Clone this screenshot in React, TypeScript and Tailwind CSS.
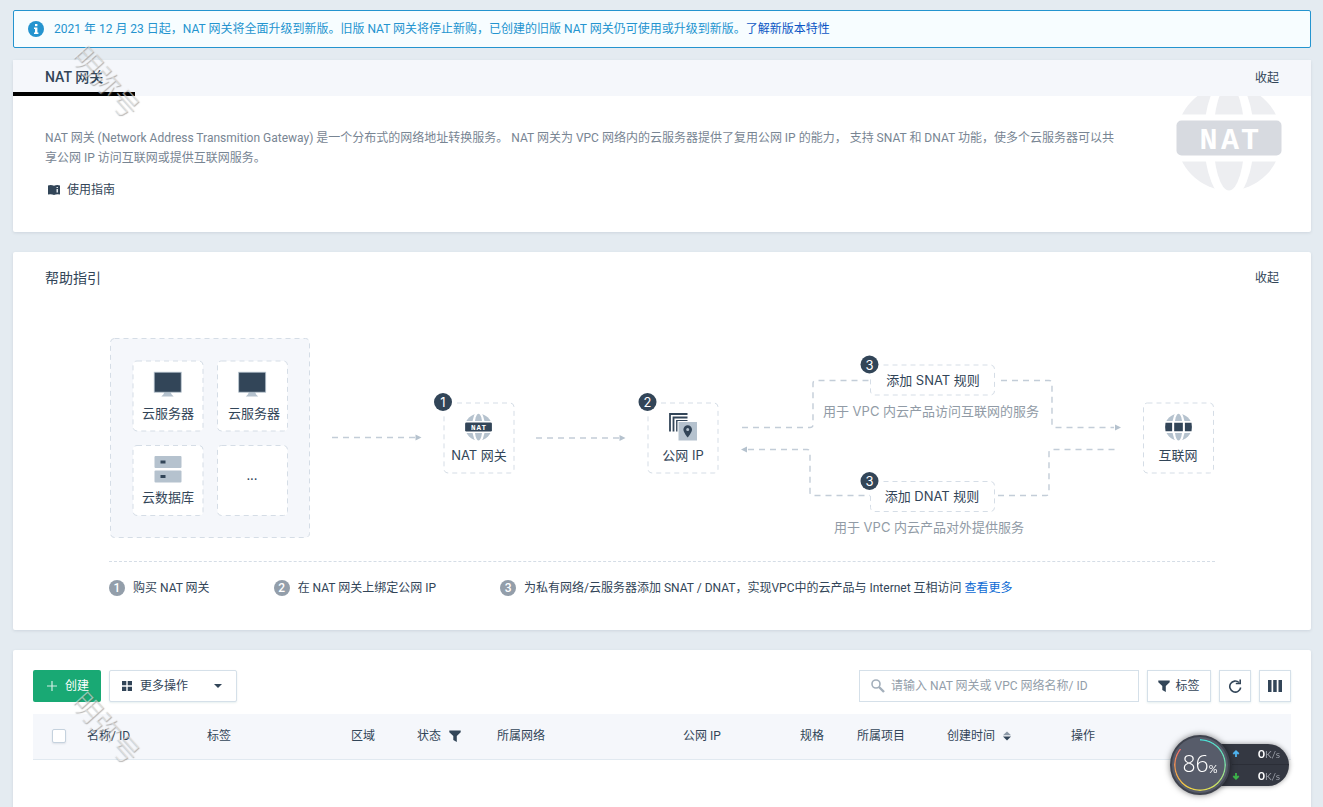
import React, { useState } from 'react'

interface Column {
  key: string
  label: string
  width: string
  filter?: boolean
  sort?: boolean
}

const columns: Column[] = [
  { key: 'name', label: '名称/ ID', width: 'w-[120px]' },
  { key: 'tag', label: '标签', width: 'w-[144px]' },
  { key: 'zone', label: '区域', width: 'w-[66px]' },
  { key: 'status', label: '状态', width: 'w-[80px]', filter: true },
  { key: 'network', label: '所属网络', width: 'w-[186px]' },
  { key: 'ip', label: '公网 IP', width: 'w-[117px]' },
  { key: 'spec', label: '规格', width: 'w-[57px]' },
  { key: 'project', label: '所属项目', width: 'w-[90px]' },
  { key: 'created', label: '创建时间', width: 'w-[124px]', sort: true },
  { key: 'action', label: '操作', width: '' },
]

function InfoIcon() {
  return (
    <svg viewBox="0 0 16 16" className="h-4 w-4 shrink-0">
      <circle cx="8" cy="8" r="8" fill="#2494cf" />
      <rect x="7" y="3" width="2.4" height="2.2" fill="#fff" />
      <path d="M6 6.6h3.4v5H10.4V13H6v-1.4h1V8H6z" fill="#fff" />
    </svg>
  )
}

function BookIcon() {
  return (
    <svg viewBox="0 0 12 10" className="h-[10px] w-3 shrink-0" fill="#324558">
      <path d="M0 .4Q3.400-.4 6 .8V10Q3.400 8.800 0 9.500z" />
      <path d="M6 .8Q8.600-.4 12 .4V9.500Q8.600 8.800 6 10z" />
      <path d="M8.500 2h1.500v1H8.500zM8.500 4h1.500v3.500H8.500z" fill="#dfe5eb" />
    </svg>
  )
}

function FilterIcon() {
  return (
    <svg viewBox="0 0 12 12" className="h-3 w-3 shrink-0" fill="#324558">
      <path d="M.3.500h11.400v1.800L7.800 6v6L4.300 10V6L.3 2.300z" />
    </svg>
  )
}

function SortIcon() {
  return (
    <svg viewBox="0 0 8 10" className="h-[10px] w-2 shrink-0">
      <path d="M4 .5L8 4.200H0z" fill="#8b98a6" />
      <path d="M0 5.500H8L4 9.500z" fill="#324558" />
    </svg>
  )
}

function GlobeShape({ color }: { color: string }) {
  return (
    <>
      <circle cx="53" cy="53" r="52.500" fill={color} />
      <ellipse cx="53" cy="53" rx="25" ry="62" fill="#fff" />
      <ellipse cx="53" cy="53" rx="15.700" ry="52.500" fill={color} />
      <rect x="0" y="29.500" width="106" height="47" fill="#fff" />
    </>
  )
}

function NatGlobe({ color, barColor }: { color: string; barColor: string }) {
  return (
    <>
      <GlobeShape color={color} />
      <rect x=".5" y="35.500" width="105" height="35" rx="5" fill={barColor} />
      <text
        x="32.500 54 74"
        y="63.500"
        textAnchor="middle"
        fill="#fff"
        fontSize="30"
        fontWeight="700"
        fontFamily='"Liberation Mono", monospace'
      >
        NAT
      </text>
    </>
  )
}

function StepBadge({ x, y, n }: { x: number; y: number; n: number }) {
  return (
    <g>
      <circle cx={x} cy={y} r="11" fill="#fff" />
      <circle cx={x} cy={y} r="9" fill="#324558" />
      <text x={x} y={y + 5} textAnchor="middle" fontSize="13" fill="#fff">
        {n}
      </text>
    </g>
  )
}

function Monitor({ x, y }: { x: number; y: number }) {
  return (
    <g transform={`translate(${x} ${y})`}>
      <path d="M10.500 20h6l1.200 2.500 2 2H7.300l2-2z" fill="#b5c2ce" />
      <rect x=".2" y=".2" width="27" height="20" fill="#324558" stroke="#b5c2ce" strokeWidth=".8" />
    </g>
  )
}

function GuideDiagram() {
  const box = { fill: '#fff', stroke: '#d5dde6', strokeDasharray: '5 4', rx: 4 }
  const line = { fill: 'none', stroke: '#c3cdd8', strokeWidth: 1.4, strokeDasharray: '6 5' }
  return (
    <svg
      viewBox="0 0 1106 204"
      role="img"
      aria-label="NAT 网关使用流程"
      className="block w-full"
      fontFamily='Inter, "Noto Sans CJK SC", sans-serif'
      fontSize="13"
      fill="#324558"
    >
      <rect {...box} x="1.500" y="1.500" width="199" height="199" fill="#f5f7fb" />
      <rect {...box} x="24" y="24" width="70" height="70" />
      <rect {...box} x="108.500" y="24" width="70" height="70" />
      <rect {...box} x="24" y="108.500" width="70" height="70" />
      <rect {...box} x="108.500" y="108.500" width="70" height="70" />
      <Monitor x={45} y={35} />
      <Monitor x={129.5} y={35} />
      <text x="33" y="81">云服务器</text>
      <text x="119" y="81">云服务器</text>
      <rect x="45.500" y="119" width="27" height="12" rx="1" fill="#b5c2ce" />
      <rect x="45.500" y="133.500" width="27" height="12" rx="1" fill="#b5c2ce" />
      <path d="M51.500 123.500h5v3h-5zM51.500 138h5v3h-5z" />
      <text x="33" y="165">云数据库</text>
      <text x="143" y="143" textAnchor="middle">...</text>

      <path {...line} d="M223 100.500H306" />
      <path d="M306.500 97.500l6 3-6 3z" fill="#b5c2ce" />

      <rect {...box} x="335" y="66" width="70" height="70" />
      <StepBadge x={334} y={65} n={1} />
      <g transform="translate(356 76.500) scale(.255)">
        <NatGlobe color="#b5c2ce" barColor="#324558" />
      </g>
      <text x="370" y="123" textAnchor="middle">NAT 网关</text>

      <path {...line} d="M427 101H510" />
      <path d="M510.500 98l6 3-6 3z" fill="#b5c2ce" />

      <rect {...box} x="539" y="66" width="70" height="70" />
      <StepBadge x={538.5} y={65} n={2} />
      <path
        d="M561 94.500V77H578.500M564.500 94.500V80.500H578.500M568 94.500V84H578.500"
        fill="none"
        stroke="#324558"
        strokeWidth="1.800"
      />
      <rect x="569" y="84.500" width="19.500" height="19.500" fill="#b5c2ce" stroke="#fff" />
      <path
        fillRule="evenodd"
        d="M578.700 88.200a4.300 4.300 0 0 1 4.300 4.300c0 3-4.300 8-4.300 8s-4.300-5-4.300-8a4.300 4.300 0 0 1 4.300-4.300zm0 2.800a1.500 1.500 0 1 0 0 3 1.500 1.500 0 0 0 0-3z"
      />
      <text x="574" y="123" textAnchor="middle">公网 IP</text>

      <path {...line} d="M633 90.500H701Q704 90.500 704 87.500V46.500Q704 43.500 707 43.500H761" />
      <path {...line} d="M892 43.500H940Q943 43.500 943 46.500V87.500Q943 90.500 946 90.500H1005" />
      <path d="M1006 87.500l6 3-6 3z" fill="#b5c2ce" />
      <path {...line} d="M639 112.500H698Q701 112.500 701 115.500V155.500Q701 158.500 704 158.500H761" />
      <path d="M638 109.500l-6 3 6 3z" fill="#b5c2ce" />
      <path {...line} d="M889 158.500H937Q940 158.500 940 155.500V115.500Q940 112.500 943 112.500H1010" />

      <rect {...box} x="761.500" y="28" width="124" height="30" />
      <StepBadge x={760.5} y={27.5} n={3} />
      <text x="824" y="48" textAnchor="middle">添加 SNAT 规则</text>
      <text x="822" y="79" textAnchor="middle" fill="#919ba6">用于 VPC 内云产品访问互联网的服务</text>

      <rect {...box} x="761.500" y="144.500" width="124" height="30" />
      <StepBadge x={760.5} y={144} n={3} />
      <text x="823" y="164" textAnchor="middle">添加 DNAT 规则</text>
      <text x="820" y="195" textAnchor="middle" fill="#919ba6">用于 VPC 内云产品对外提供服务</text>

      <rect {...box} x="1034.500" y="66" width="70" height="70" />
      <g transform="translate(1056 76.500) scale(.255)">
        <GlobeShape color="#b5c2ce" />
        <path d="M2 36h26v34H2Q-1 53 2 36zM36 36h34v34H36zM78 36h26Q107 53 104 70H78z" />
      </g>
      <text x="1069" y="123" textAnchor="middle">互联网</text>
    </svg>
  )
}

function Step({ n, children }: { n: number; children: React.ReactNode }) {
  return (
    <li className="flex items-center gap-2">
      <span className="flex h-4 w-4 items-center justify-center rounded-full bg-[#939eaa] text-xs font-medium text-white">
        {n}
      </span>
      <span>{children}</span>
    </li>
  )
}

function Watermark({ className }: { className: string }) {
  return (
    <div
      aria-hidden="true"
      className={`pointer-events-none absolute rotate-[48deg] font-['Noto_Sans_CJK_SC',sans-serif] text-[28px] leading-7 font-light whitespace-nowrap text-white/50 [text-shadow:1px_0_1px_rgba(90,90,90,0.5)] ${className}`}
    >
      明弥号
    </div>
  )
}

function SpeedMonitor() {
  return (
    <div className="fixed right-[34px] bottom-3 flex items-center font-[Lato,sans-serif] text-white">
      <div className="relative z-10 flex h-[60px] w-[60px] items-center justify-center rounded-full border-2 border-[#3f434e] bg-[#575c6a] pb-1 shadow-[0_0_6px_rgba(0,0,0,0.5)]">
        <div className="absolute inset-[2px] rounded-full bg-[conic-gradient(#45e0dc_0deg,#6fe0b0_80deg,#d6e25c_150deg,#f2cf45_210deg,#f09a4c_260deg,#ee6a6a_309deg,transparent_310deg)] [mask:radial-gradient(closest-side,transparent_24px,black_25px)]" />
        <span className="font-['Open_Sans',sans-serif] text-[23px] leading-6 font-light">86</span>
        <span className="mt-3 text-[11px]">%</span>
      </div>
      <div className="-ml-4 h-[42px] w-[75px] rounded-r-full bg-[#343842] pl-[18px] shadow-[0_0_5px_rgba(0,0,0,0.4)]">
        <div className="flex h-[21px] items-center border-b border-[#2b2e37]">
          <svg viewBox="0 0 8 8" className="h-2 w-2" fill="none" stroke="#4fb4f0" strokeWidth="1.800">
            <path d="M4 7V1.500M1.300 4L4 1.300 6.700 4" />
          </svg>
          <span className="ml-[18px] text-xs font-bold">0</span>
          <span className="text-[10px] text-[#9b9fa8]">K/s</span>
        </div>
        <div className="flex h-[21px] items-center">
          <svg viewBox="0 0 8 8" className="h-2 w-2" fill="none" stroke="#3db54a" strokeWidth="1.800">
            <path d="M4 1V6.500M1.300 4L4 6.700 6.700 4" />
          </svg>
          <span className="ml-[18px] text-xs font-bold">0</span>
          <span className="text-[10px] text-[#9b9fa8]">K/s</span>
        </div>
      </div>
    </div>
  )
}

const card = 'rounded-xs bg-white shadow-[0_1px_3px_rgba(50,69,88,0.12)]'
const outlineButton =
  'flex h-8 items-center justify-center border border-[#d5e0e9] bg-white shadow-[0_1px_2px_rgba(50,120,120,0.12)]'

export default function App() {
  const [showIntro, setShowIntro] = useState(true)
  const [showGuide, setShowGuide] = useState(true)
  const [keyword, setKeyword] = useState('')

  return (
    <div className="relative h-screen overflow-hidden bg-[#e4ebf1] pt-[10px] pr-3 pl-[13px] font-[Roboto,'Noto_Sans_CJK_SC',sans-serif] text-xs leading-5 text-[#324558]">
      {/* Upgrade notice */}
      <div className="flex h-[38px] items-center gap-[10px] rounded-xs border border-[#2494cf] bg-[#f7fdff] px-[14px] text-[#2494cf]">
        <InfoIcon />
        <p>
          2021 年 12 月 23 日起，NAT 网关将全面升级到新版。旧版 NAT 网关将停止新购，已创建的旧版 NAT 网关仍可使用或升级到新版。
          <a href="#features" className="text-[#0c56c4]">了解新版本特性</a>
        </p>
      </div>

      {/* Intro */}
      <section className={`mt-3 ${card}`}>
        <div className="flex h-9 items-center justify-between bg-[#f5f7fb] pr-8">
          <h1 className="h-9 border-b-4 border-black pr-8 pl-8 text-sm leading-[34px] font-medium">NAT 网关</h1>
          <button type="button" onClick={() => setShowIntro(!showIntro)}>收起</button>
        </div>
        {showIntro && (
          <div className="flex h-[136px] items-start justify-between gap-[60px] pr-[29px] pl-8">
            <div className="flex-1 pt-8">
              <p className="text-[#788593]">
                NAT 网关 (Network Address Transmition Gateway) 是一个分布式的网络地址转换服务。 NAT 网关为 VPC 网络内的云服务器提供了复用公网 IP 的能力， 支持 SNAT 和 DNAT 功能，使多个云服务器可以共享公网 IP 访问互联网或提供互联网服务。
              </p>
              <a href="#guide" className="mt-3 inline-flex items-center gap-[7px] pl-[3px]">
                <BookIcon />
                使用指南
              </a>
            </div>
            <svg viewBox="0 11 106 95" className="h-[95px] w-[106px] shrink-0">
              <NatGlobe color="#edeef1" barColor="#d7dae0" />
            </svg>
          </div>
        )}
      </section>

      {/* Guide */}
      <section className={`mt-5 ${card}`}>
        <div className="flex items-center justify-between px-8 pt-4">
          <h2 className="text-sm">帮助指引</h2>
          <button type="button" onClick={() => setShowGuide(!showGuide)}>收起</button>
        </div>
        {showGuide && (
          <div className="mx-auto max-w-[1298px] px-24 pt-[49px] pb-8">
            <GuideDiagram />
            <ol className="mt-5 flex gap-16 border-t border-dashed border-[#d5dde6] pt-4">
              <Step n={1}>购买 NAT 网关</Step>
              <Step n={2}>在 NAT 网关上绑定公网 IP</Step>
              <Step n={3}>
                为私有网络/云服务器添加 SNAT / DNAT，实现VPC中的云产品与 Internet 互相访问{' '}
                <a href="#more" className="text-[#0c6ad4]">查看更多</a>
              </Step>
            </ol>
          </div>
        )}
      </section>

      {/* Gateway list */}
      <section className={`mt-5 min-h-screen px-5 pt-5 ${card}`}>
        <div className="flex gap-2">
          <button type="button" className="flex h-8 w-[68px] items-center justify-center gap-2 rounded-xs bg-[#19a974] pl-[2px] text-white">
            <svg viewBox="0 0 10 10" className="h-[10px] w-[10px]" stroke="#fff" strokeWidth="1.200" opacity=".8">
              <path d="M5 0V10M0 5H10" />
            </svg>
            创建
          </button>
          <button type="button" className={`w-32 rounded-xs pr-[2px] ${outlineButton}`}>
            <svg viewBox="0 0 10 10" className="h-[10px] w-[10px]" fill="#324558">
              <path d="M0 0h4.300v4.300H0zM5.700 0H10v4.300H5.700zM0 5.700h4.300V10H0zM5.700 5.700H10V10H5.700z" />
            </svg>
            <span className="mr-[26px] ml-2">更多操作</span>
            <svg viewBox="0 0 8 4" className="h-1 w-2" fill="#324558">
              <path d="M0 0H8L4 4z" />
            </svg>
          </button>
          <label className="ml-auto flex h-8 w-[280px] items-center gap-[6px] border border-[#d5e0e9] pl-[11px]">
            <svg viewBox="0 0 14 14" className="h-[14px] w-[14px] shrink-0" fill="none" stroke="#a3afbb">
              <circle cx="5" cy="5" r="4" strokeWidth="1.600" />
              <path d="M8 8L13 13" strokeWidth="2.400" />
            </svg>
            <input
              type="text"
              aria-label="搜索"
              value={keyword}
              onChange={e => setKeyword(e.target.value)}
              placeholder="请输入 NAT 网关或 VPC 网络名称/ ID"
              className="min-w-0 flex-1 outline-none placeholder:text-[#939eaa]"
            />
          </label>
          <button type="button" className={`w-16 gap-[5px] ${outlineButton}`}>
            <FilterIcon />
            标签
          </button>
          <button type="button" aria-label="刷新" className={`w-8 ${outlineButton}`}>
            <svg viewBox="0 0 14 14" className="h-[14px] w-[14px]" fill="none" stroke="#324558" strokeWidth="1.600">
              <path d="M11 3.500A5.500 5.500 0 1 0 12.700 8.500" />
              <path d="M7.800 4.500H12.200V.5" />
            </svg>
          </button>
          <button type="button" aria-label="自定义列" className={`w-8 ${outlineButton}`}>
            <svg viewBox="0 0 14 12" className="h-3 w-[14px]" fill="#324558">
              <path d="M0 0h3.500v12H0zM5.200 0h3.500v12H5.200zM10.500 0H14v12H10.500z" />
            </svg>
          </button>
        </div>

        <table className="mt-3 w-full table-fixed text-left">
          <thead>
            <tr className="h-[45px] border-b border-[#e1e9f0] bg-[#f5f7fb]">
              <th className="w-[54px] pl-[19px]">
                <input
                  type="checkbox"
                  aria-label="全选"
                  className="block h-[14px] w-[14px] appearance-none rounded-xs border border-[#c5d2de] bg-white shadow-[0_1px_2px_rgba(50,69,88,0.12)]"
                />
              </th>
              {columns.map(col => (
                <th key={col.key} className={`font-normal ${col.width}`}>
                  <span className="flex items-center gap-2 whitespace-nowrap">
                    {col.label}
                    {col.filter && <FilterIcon />}
                    {col.sort && <SortIcon />}
                  </span>
                </th>
              ))}
            </tr>
          </thead>
        </table>
      </section>

      <Watermark className="top-[67px] left-[65px]" />
      <Watermark className="top-[713px] left-[65px]" />
      <SpeedMonitor />
    </div>
  )
}
